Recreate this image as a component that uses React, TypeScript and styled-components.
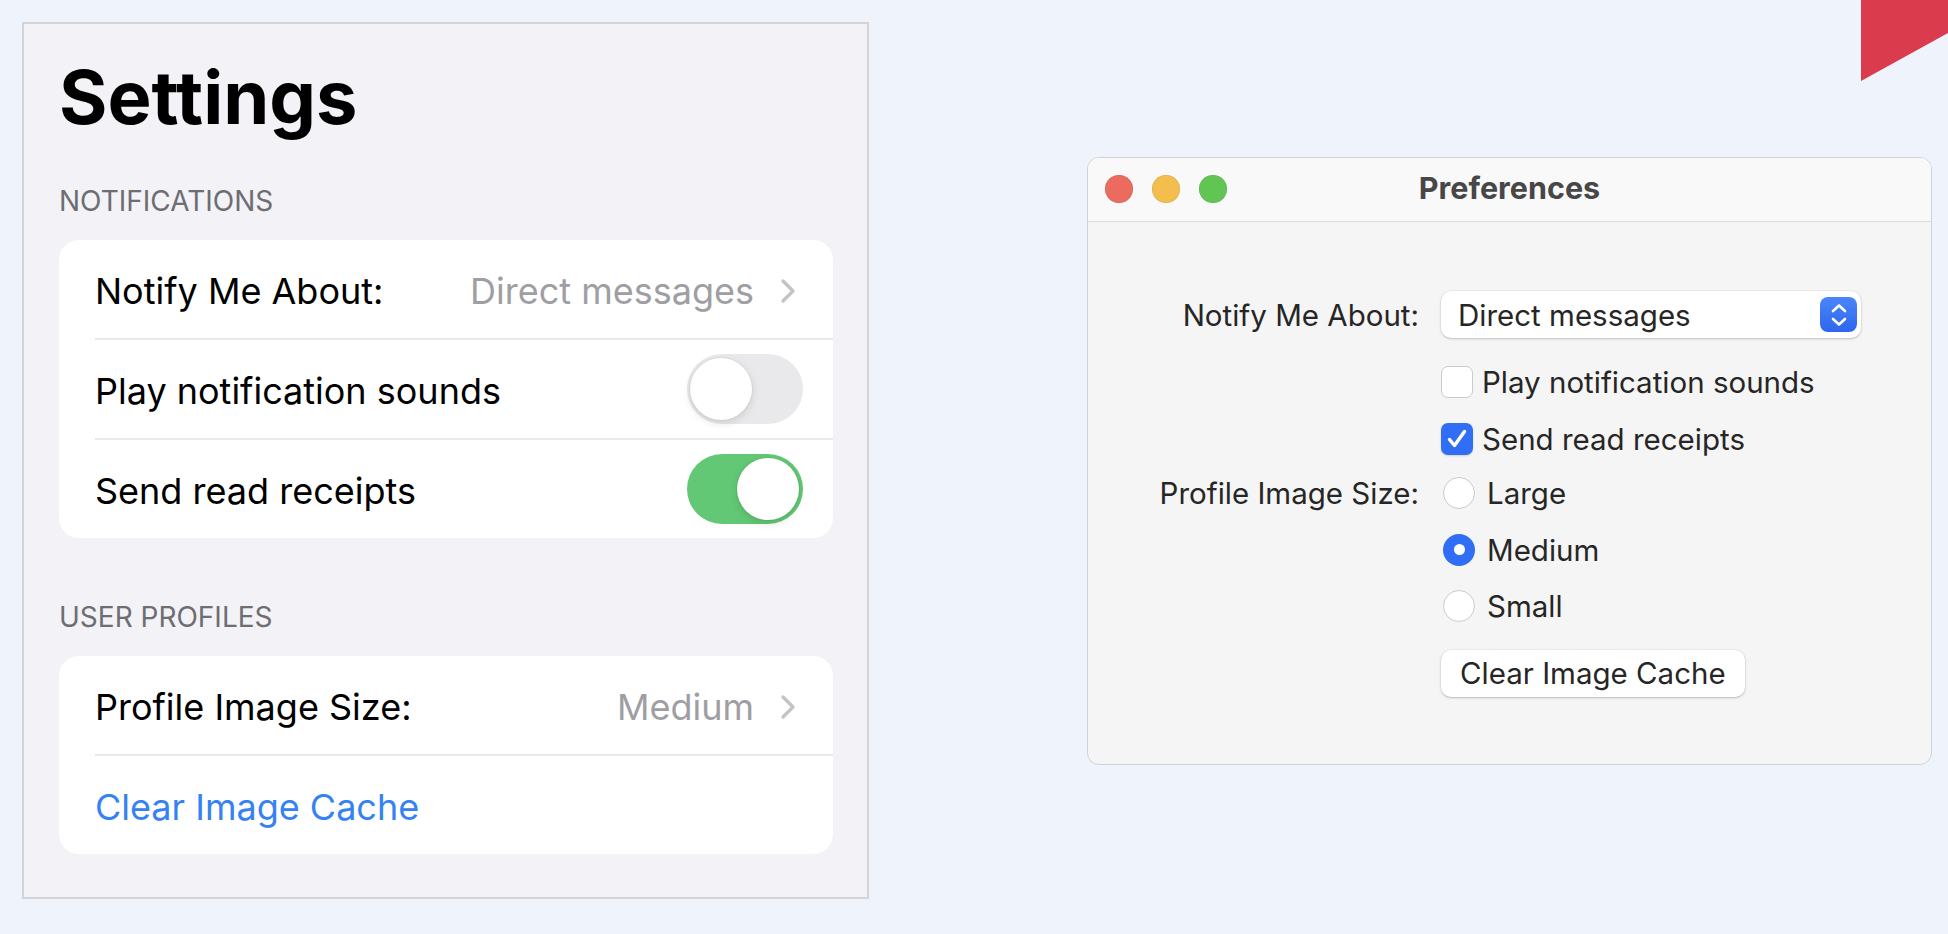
import React from 'react';
import styled, { createGlobalStyle } from 'styled-components';

const GlobalStyle = createGlobalStyle`
  html, body {
    margin: 0;
    padding: 0;
  }
  body {
    background: #eff4fc;
    font-family: Inter, "Noto Sans", sans-serif;
    -webkit-font-smoothing: antialiased;
  }
`;

const Page = styled.div`
  position: relative;
  box-sizing: border-box;
  width: 100%;
  min-height: 100vh;
  display: flex;
  align-items: flex-start;
  padding: 22px 0 0 22px;
  overflow: hidden;
`;

const Corner = styled.svg`
  position: absolute;
  top: 0;
  right: 0;
`;

/* ---------- iOS style settings ---------- */

const IosPanel = styled.section`
  box-sizing: border-box;
  width: 847px;
  height: 877px;
  border: 2px solid #d3d3d8;
  background: #f2f2f7;
  padding: 29px 34px 0 35px;
`;

const LargeTitle = styled.h1`
  margin: 0;
  font-size: 74px;
  line-height: 88px;
  font-weight: 700;
  letter-spacing: 0;
  color: #000;
`;

const SectionLabel = styled.div<{ $top: number }>`
  margin: ${p => p.$top}px 0 19px;
  font-size: 28px;
  line-height: 40px;
  color: #6d6d72;
  text-transform: uppercase;
`;

const Card = styled.div`
  background: #fff;
  border-radius: 20px;
  overflow: hidden;
`;

const Row = styled.div`
  display: flex;
  align-items: center;
  justify-content: space-between;
  height: 98px;
  margin-left: 36px;
  padding-right: 30px;
  font-size: 36px;
  color: #000;

  & + & {
    border-top: 2px solid #e9e9eb;
  }
`;

const RowLabel = styled.span<{ $link?: boolean }>`
  padding-top: 4px;
  color: ${p => (p.$link ? '#3582f4' : '#000')};
`;

const RowValue = styled.span`
  display: flex;
  align-items: center;
  gap: 26px;
  padding: 4px 7px 0 0;
  color: #9e9ea3;
`;

const Toggle = styled.span<{ $on?: boolean }>`
  position: relative;
  display: block;
  width: 116px;
  height: 70px;
  border-radius: 35px;
  background: ${p => (p.$on ? '#62c875' : '#e9e9eb')};

  &::after {
    content: '';
    position: absolute;
    top: 4px;
    left: ${p => (p.$on ? '50px' : '3px')};
    width: 62px;
    height: 62px;
    border-radius: 50%;
    background: #fff;
    box-shadow: 0 3px 8px rgba(0, 0, 0, 0.12), 0 0 0 1px rgba(0, 0, 0, 0.04);
  }
`;

const Chevron = () => (
  <svg width="16" height="26" viewBox="0 0 16 26">
    <polyline points="3,3 13,13 3,23" fill="none" stroke="#c4c4c8" strokeWidth="3.4" strokeLinecap="round" strokeLinejoin="round" />
  </svg>
);

/* ---------- macOS style preferences ---------- */

const MacWindow = styled.section`
  box-sizing: border-box;
  width: 845px;
  height: 608px;
  margin: 135px 0 0 218px;
  border: 1px solid #d2d2d4;
  border-radius: 12px;
  background: #f5f5f5;
  overflow: hidden;
  color: #262626;
`;

const TitleBar = styled.header`
  display: grid;
  grid-template-columns: 1fr auto 1fr;
  align-items: center;
  height: 63px;
  padding: 0 17px;
  background: #f9f9f9;
  border-bottom: 1.5px solid #dcdcdc;
`;

const Lights = styled.div`
  display: flex;
  gap: 19px;
  padding-bottom: 2px;
`;

const Light = styled.span<{ $color: string }>`
  width: 28px;
  height: 28px;
  border-radius: 50%;
  background: ${p => p.$color};
  box-shadow: inset 0 0 0 0.5px rgba(0, 0, 0, 0.12);
`;

const WindowTitle = styled.div`
  font-size: 30.5px;
  font-weight: 700;
  color: #474747;
  padding-bottom: 4px;
`;

const Form = styled.div`
  display: grid;
  grid-template-columns: 331px auto;
  grid-template-rows: 73px 62px 52px 56px 57px 55px 80px;
  column-gap: 22px;
  align-items: center;
  justify-items: start;
  padding-top: 56px;
  font-size: 29.5px;
`;

const FormLabel = styled.div<{ $row: number }>`
  grid-column: 1;
  grid-row: ${p => p.$row};
  justify-self: end;
`;

const Control = styled.div<{ $row: number }>`
  grid-column: 2;
  grid-row: ${p => p.$row};
  display: flex;
  align-items: center;
`;

const Popup = styled.div`
  box-sizing: border-box;
  display: flex;
  align-items: center;
  justify-content: space-between;
  width: 420px;
  height: 47px;
  padding: 0 4px 0 17px;
  border-radius: 10px;
  background: #fff;
  box-shadow: 0 1px 2.5px rgba(0, 0, 0, 0.2), 0 0 0 0.5px rgba(0, 0, 0, 0.06);
`;

const Stepper = styled.span`
  display: flex;
  align-items: center;
  justify-content: center;
  width: 37px;
  height: 35px;
  border-radius: 8px;
  background: linear-gradient(#4a86f9, #2d66ef);
`;

const CheckBox = styled.span<{ $checked?: boolean }>`
  box-sizing: border-box;
  display: flex;
  align-items: center;
  justify-content: center;
  width: 32px;
  height: 32px;
  margin-right: 9px;
  border-radius: 7px;
  background: ${p => (p.$checked ? '#2f6ef5' : '#fff')};
  border: ${p => (p.$checked ? 'none' : '1px solid #cbcbcb')};
  box-shadow: ${p => (p.$checked ? '0 1px 2px rgba(0,0,0,0.15)' : 'none')};
`;

const Radio = styled.span<{ $checked?: boolean }>`
  box-sizing: border-box;
  display: flex;
  align-items: center;
  justify-content: center;
  width: 32px;
  height: 32px;
  margin: 0 12px 0 2px;
  border-radius: 50%;
  background: ${p => (p.$checked ? '#2f6ef5' : '#fff')};
  border: ${p => (p.$checked ? 'none' : '1px solid #cbcbcb')};

  &::after {
    content: '';
    display: ${p => (p.$checked ? 'block' : 'none')};
    width: 11px;
    height: 11px;
    border-radius: 50%;
    background: #fff;
  }
`;

const PushButton = styled.button`
  box-sizing: border-box;
  height: 47px;
  padding: 0 19px;
  border: none;
  border-radius: 10px;
  background: #fff;
  font: inherit;
  color: #262626;
  box-shadow: 0 1px 2.5px rgba(0, 0, 0, 0.22), 0 0 0 0.5px rgba(0, 0, 0, 0.06);
`;

export default function App() {
  return (
    <Page>
      <GlobalStyle />
      <Corner width="87" height="81" viewBox="0 0 87 81">
        <polygon points="0,0 87,0 87,33 0,81" fill="#da3b4d" />
      </Corner>

      <IosPanel>
        <LargeTitle>Settings</LargeTitle>

        <SectionLabel $top={40}>Notifications</SectionLabel>
        <Card>
          <Row>
            <RowLabel>Notify Me About:</RowLabel>
            <RowValue>
              Direct messages
              <Chevron />
            </RowValue>
          </Row>
          <Row>
            <RowLabel>Play notification sounds</RowLabel>
            <Toggle />
          </Row>
          <Row>
            <RowLabel>Send read receipts</RowLabel>
            <Toggle $on />
          </Row>
        </Card>

        <SectionLabel $top={59}>User Profiles</SectionLabel>
        <Card>
          <Row>
            <RowLabel>Profile Image Size:</RowLabel>
            <RowValue>
              Medium
              <Chevron />
            </RowValue>
          </Row>
          <Row>
            <RowLabel $link>Clear Image Cache</RowLabel>
          </Row>
        </Card>
      </IosPanel>

      <MacWindow>
        <TitleBar>
          <Lights>
            <Light $color="#ec6b5f" />
            <Light $color="#f4be4f" />
            <Light $color="#61c554" />
          </Lights>
          <WindowTitle>Preferences</WindowTitle>
          <span />
        </TitleBar>

        <Form>
          <FormLabel $row={1}>Notify Me About:</FormLabel>
          <Control $row={1}>
            <Popup>
              Direct messages
              <Stepper>
                <svg width="20" height="26" viewBox="0 0 20 26">
                  <polyline points="4,9 10,3.5 16,9" fill="none" stroke="#fff" strokeWidth="2.6" strokeLinecap="round" strokeLinejoin="round" />
                  <polyline points="4,17 10,22.5 16,17" fill="none" stroke="#fff" strokeWidth="2.6" strokeLinecap="round" strokeLinejoin="round" />
                </svg>
              </Stepper>
            </Popup>
          </Control>

          <Control $row={2}>
            <CheckBox />
            Play notification sounds
          </Control>

          <Control $row={3}>
            <CheckBox $checked>
              <svg width="26" height="26" viewBox="0 0 26 26">
                <polyline points="5.5,13.5 10.5,19.5 20.5,5.5" fill="none" stroke="#fff" strokeWidth="3.4" strokeLinecap="round" strokeLinejoin="round" />
              </svg>
            </CheckBox>
            Send read receipts
          </Control>

          <FormLabel $row={4}>Profile Image Size:</FormLabel>
          <Control $row={4}>
            <Radio />
            Large
          </Control>
          <Control $row={5}>
            <Radio $checked />
            Medium
          </Control>
          <Control $row={6}>
            <Radio />
            Small
          </Control>

          <Control $row={7}>
            <PushButton>Clear Image Cache</PushButton>
          </Control>
        </Form>
      </MacWindow>
    </Page>
  );
}
